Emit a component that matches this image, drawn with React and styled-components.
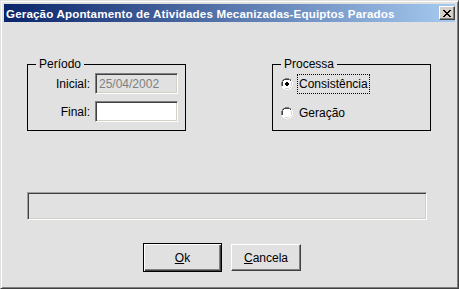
import React from "react";
import styled, { createGlobalStyle } from "styled-components";

const Global = createGlobalStyle`
  html, body { margin: 0; padding: 0; background: #e1e1e1; }
  body { font-family: "Liberation Sans", Arial, sans-serif; font-size: 11px; color: #000; }
  * { box-sizing: border-box; }
`;

const Face = "#e1e1e1";

const Window = styled.div`
  width: 459px;
  height: 289px;
  background: ${Face};
  border: 1px solid;
  border-color: #e1e1e1 #404040 #404040 #e1e1e1;
  display: flex;
  flex-direction: column;
  box-shadow: inset 1px 1px 0 #ffffff, inset -1px -1px 0 #808080;
  padding: 3px;
`;

const TitleBar = styled.div`
  height: 18px;
  flex: none;
  background: linear-gradient(to right, #0a246a, #a6caf0);
  display: flex;
  align-items: center;
  justify-content: space-between;
  padding: 0 0 0 2px;
`;

const Title = styled.span`
  color: #fff;
  font-weight: bold;
  font-size: 11.6px;
  font-family: "Liberation Sans", Arial, sans-serif;
  white-space: nowrap;
  letter-spacing: 0.15px;
`;

const CloseButton = styled.div`
  width: 16px;
  height: 14px;
  background: #d4d0c8;
  border: 1px solid;
  border-color: #ffffff #404040 #404040 #ffffff;
  box-shadow: inset -1px -1px 0 #808080;
  display: flex;
  align-items: center;
  justify-content: center;
`;

const Content = styled.div`
  flex: 1;
  display: flex;
  flex-direction: column;
  padding: 42px 0 0 23px;
`;

const GroupRow = styled.div`
  display: flex;
  gap: 86px;
`;

const Group = styled.div`
  position: relative;
  width: 159px;
  height: 67px;
  border: 1px solid #000;
  padding: ${(p) => p.$pad};
`;

const GroupLabel = styled.span`
  position: absolute;
  top: -8px;
  left: 8px;
  padding: 0 3px;
  background: ${Face};
  line-height: 14px;
  font-size: 12px;
`;

const FieldRow = styled.div`
  display: flex;
  align-items: center;
  gap: 5px;
  height: 21px;
  margin-bottom: 7px;
`;

const FieldLabel = styled.span`
  width: 62px;
  text-align: right;
  font-size: 12px;
`;

const Input = styled.div`
  width: 83px;
  height: 21px;
  background: ${(p) => (p.$disabled ? Face : "#fff")};
  color: ${(p) => (p.$disabled ? "#808080" : "#000")};
  border: 1px solid;
  border-color: #808080 #ffffff #ffffff #808080;
  box-shadow: inset 1px 1px 0 #404040, inset -1px -1px 0 #d4d0c8;
  padding: 0 0 0 3px;
  display: flex;
  align-items: center;
  font-size: 12px;
`;

const RadioRow = styled.div`
  display: flex;
  align-items: center;
  gap: 4px;
  height: 20px;
  margin-bottom: 9px;
`;

const RadioText = styled.span`
  font-size: 12px;
  padding: 2px 1px;
  border: 1px dotted ${(p) => (p.$focus ? "#000" : "transparent")};
  line-height: 14px;
`;

const Progress = styled.div`
  margin-top: 61px;
  width: 400px;
  height: 28px;
  border: 1px solid;
  border-color: #a0a0a0 #ffffff #ffffff #a0a0a0;
  box-shadow: inset 1px 1px 0 #404040, inset -1px -1px 0 #d4d0c8;
`;

const ButtonRow = styled.div`
  margin-top: 23px;
  display: flex;
  align-items: center;
  padding-left: 116px;
  gap: 9px;
`;

const Button = styled.div`
  width: ${(p) => p.$w}px;
  height: ${(p) => p.$h}px;
  background: ${Face};
  border: 1px solid;
  border-color: ${(p) => (p.$default ? "#000" : "#ffffff #404040 #404040 #ffffff")};
  box-shadow: ${(p) =>
    p.$default
      ? "inset 1px 1px 0 #ffffff, inset -1px -1px 0 #404040, inset -2px -2px 0 #808080"
      : "inset -1px -1px 0 #808080"};
  display: flex;
  align-items: center;
  justify-content: center;
  font-size: 12px;
  u { text-decoration: underline; }
`;

function Radio({ checked }) {
  return (
    <svg width="12" height="12" viewBox="0 0 12 12" shapeRendering="crispEdges">
      <path d="M4 0h4v1h2v1h1v2h1v4h-1v2h-1v1h-2v1h-4v-1h-2v-1h-1v-2h-1v-4h1v-2h1v-1h2z" fill="#ffffff" />
      <path d="M4 0h4v1h2v1h-2v-1h-4v1h-2v2h-1v4h-1v-4h1v-2h1v-1h2z" fill="#808080" />
      <path d="M4 1h4v1h2v1h-2v-1h-4v1h-1v1h-1v4h-1v-4h1v-2h1v-1h2z" fill="#404040" />
      <path d="M10 2h1v2h1v4h-1v2h-1v1h-2v1h-4v-1h4v-1h2v-2h1v-4h-1z" fill="#ffffff" />
      <path d="M10 3h0v1h1v4h-1v2h-2v1h-4v-1h4v-1h1v-1h1v-4h-1z" fill="#d4d0c8" />
      <rect x="3" y="2" width="6" height="8" fill="#fff" />
      <rect x="2" y="3" width="8" height="6" fill="#fff" />
      {checked && (
        <>
          <rect x="5" y="4" width="2" height="4" fill="#000" />
          <rect x="4" y="5" width="4" height="2" fill="#000" />
        </>
      )}
    </svg>
  );
}

export default function App() {
  return (
    <>
      <Global />
      <Window>
        <TitleBar>
          <Title>Geração Apontamento de Atividades Mecanizadas-Equiptos Parados</Title>
          <CloseButton>
            <svg width="8" height="7" viewBox="0 0 8 7" shapeRendering="crispEdges">
              <path d="M0 0h2v1h1v1h2v-1h1v-1h2v1h-1v1h-1v1h-1v1h1v1h1v1h1v1h-2v-1h-1v-1h-2v1h-1v1h-2v-1h1v-1h1v-1h1v-1h-1v-1h-1v-1h-1z" fill="#000" />
            </svg>
          </CloseButton>
        </TitleBar>
        <Content>
          <GroupRow>
            <Group $pad="8px 0 0 0">
              <GroupLabel>Período</GroupLabel>
              <FieldRow>
                <FieldLabel>Inicial:</FieldLabel>
                <Input $disabled>25/04/2002</Input>
              </FieldRow>
              <FieldRow>
                <FieldLabel>Final:</FieldLabel>
                <Input />
              </FieldRow>
            </Group>
            <Group $pad="9px 0 0 8px">
              <GroupLabel>Processa</GroupLabel>
              <RadioRow>
                <Radio checked />
                <RadioText $focus>Consistência</RadioText>
              </RadioRow>
              <RadioRow>
                <Radio />
                <RadioText>Geração</RadioText>
              </RadioRow>
            </Group>
          </GroupRow>
          <Progress />
          <ButtonRow>
            <Button $default $w={79} $h={29}>
              <span><u>O</u>k</span>
            </Button>
            <Button $w={70} $h={27}>
              <span><u>C</u>ancela</span>
            </Button>
          </ButtonRow>
        </Content>
      </Window>
    </>
  );
}
